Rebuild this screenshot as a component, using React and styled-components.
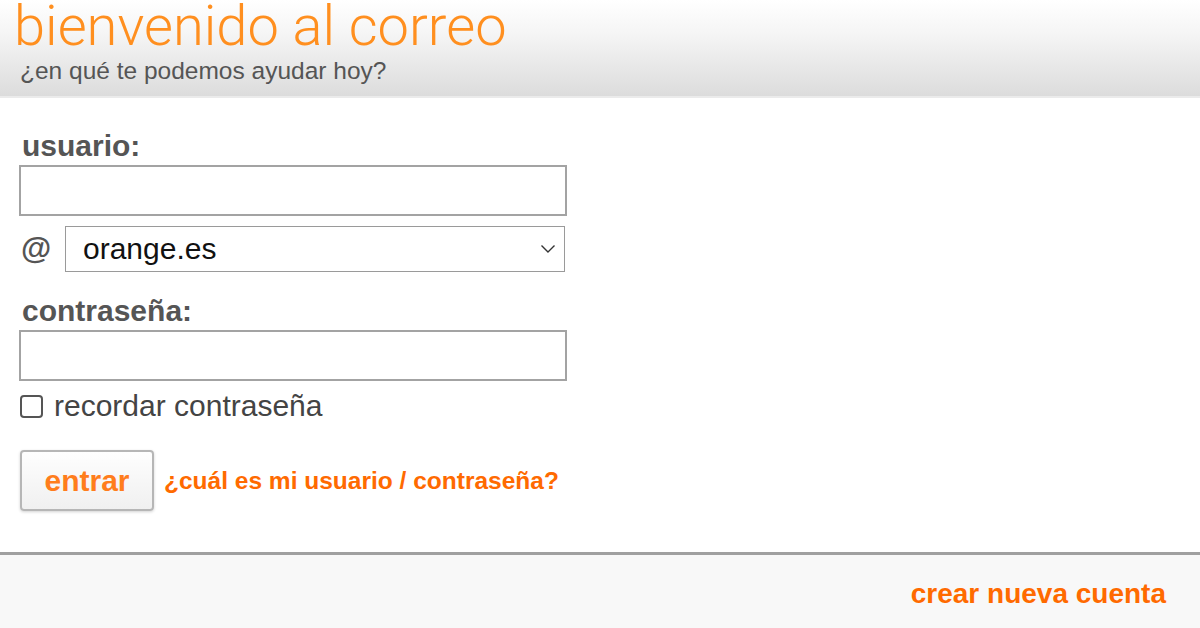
import React from 'react'
import styled, {createGlobalStyle} from 'styled-components'

const GlobalStyle = createGlobalStyle`
  html, body {
    margin: 0;
    padding: 0;
    background: #fff;
    font-family: "Liberation Sans", Arial, sans-serif;
  }
`

const Page = styled.div`
  width: 1200px;
  height: 628px;
  display: flex;
  flex-direction: column;
  overflow: hidden;
`

const Header = styled.header`
  height: 98px;
  flex: none;
  box-sizing: border-box;
  padding: 0 0 0 14px;
  background: linear-gradient(to bottom, #ffffff 0%, #f5f5f5 35%, #dcdcdc 100%);
  border-bottom: 2px solid #ebebeb;
`

const Title = styled.h1`
  margin: -2px 0 -3px;
  font-family: Roboto, "Liberation Sans", sans-serif;
  font-weight: 300;
  font-size: 56px;
  line-height: 57px;
  color: #ff8f1f;
  white-space: nowrap;
`

const Subtitle = styled.p`
  margin: 5px 0 0 6px;
  font-size: 24.5px;
  line-height: 28px;
  color: #555;
`

const Form = styled.form`
  display: flex;
  flex-direction: column;
  align-items: flex-start;
  padding: 31px 0 0 19px;
  flex: 1;
`

const Label = styled.label`
  font-size: 30px;
  font-weight: bold;
  color: #555;
  line-height: 34px;
  margin: ${p => p.$top || 0}px 0 2px 3px;
`

const TextInput = styled.input`
  box-sizing: border-box;
  width: 548px;
  height: 51px;
  border: 2px solid #a3a3a3;
  background: #fff;
  font-size: 28px;
  padding: 0 10px;
  margin: 0;
  outline: none;
`

const DomainRow = styled.div`
  display: flex;
  align-items: center;
  gap: 13px;
  margin: 10px 0 0 2px;
`

const At = styled.span`
  font-size: 31px;
  line-height: 34px;
  font-weight: bold;
  color: #555;
  width: 31px;
`

const SelectBox = styled.div`
  position: relative;
  width: 500px;
  height: 46px;
  box-sizing: border-box;
  border: 1px solid #9a9a9a;
  display: flex;
  align-items: center;
  padding: 0 17px;
  font-size: 30px;
  color: #111;
  background: #fff;
`

const Chevron = styled.svg`
  position: absolute;
  right: 8px;
  top: 17px;
`

const CheckRow = styled.div`
  display: flex;
  align-items: center;
  gap: 11px;
  margin: 8px 0 0 1px;
  font-size: 30px;
  line-height: 34px;
  color: #444;
`

const Box = styled.span`
  width: 19px;
  height: 19px;
  border: 2px solid #555;
  border-radius: 4px;
  background: #fff;
`

const Actions = styled.div`
  display: flex;
  align-items: center;
  gap: 10px;
  margin: 27px 0 0 1px;
`

const Button = styled.button`
  width: 134px;
  height: 61px;
  border: 2px solid #b6b6b6;
  border-radius: 4px;
  background: linear-gradient(to bottom, #fefefe 0%, #f0f0f0 100%);
  box-shadow: 0 1px 3px rgba(0,0,0,0.18);
  font-family: "Liberation Sans", Arial, sans-serif;
  font-weight: bold;
  font-size: 30px;
  color: #ff7d1c;
  padding: 0;
`

const Link = styled.a`
  font-size: 24.5px;
  line-height: 28px;
  font-weight: bold;
  color: #ff6a00;
  text-decoration: none;
`

const Footer = styled.footer`
  height: 76px;
  flex: none;
  border-top: 3px solid #a0a0a0;
  background: #f8f8f8;
  display: flex;
  justify-content: flex-end;
  align-items: flex-start;
  padding: 23px 34px 0 0;
  box-sizing: border-box;
`

const FooterLink = styled(Link)`
  font-size: 28px;
  line-height: 32px;
`

const App = () => {
  return (
    <>
      <GlobalStyle />
      <Page>
        <Header>
          <Title>bienvenido al correo</Title>
          <Subtitle>¿en qué te podemos ayudar hoy?</Subtitle>
        </Header>
        <Form onSubmit={e => e.preventDefault()}>
          <Label>usuario:</Label>
          <TextInput type="text" />
          <DomainRow>
            <At>@</At>
            <SelectBox>
              orange.es
              <Chevron width="16" height="10" viewBox="0 0 16 10">
                <path d="M1.5 1.5 L8 8 L14.5 1.5" fill="none" stroke="#333" strokeWidth="1.4" />
              </Chevron>
            </SelectBox>
          </DomainRow>
          <Label $top={22}>contraseña:</Label>
          <TextInput type="password" />
          <CheckRow>
            <Box />
            recordar contraseña
          </CheckRow>
          <Actions>
            <Button type="submit">entrar</Button>
            <Link href="#">¿cuál es mi usuario / contraseña?</Link>
          </Actions>
        </Form>
        <Footer>
          <FooterLink href="#">crear nueva cuenta</FooterLink>
        </Footer>
      </Page>
    </>
  )
}

export default App
